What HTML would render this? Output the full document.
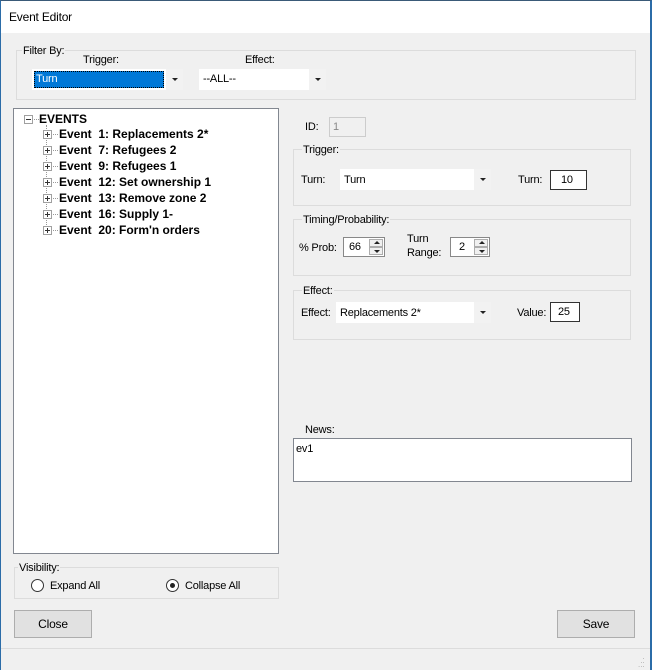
<!DOCTYPE html>
<html><head><meta charset="utf-8"><style>
*{box-sizing:border-box;margin:0;padding:0}
body{width:652px;height:670px;background:#f0f0f0;font-family:"Liberation Sans",sans-serif;font-size:11px;color:#000;position:relative;overflow:hidden;letter-spacing:-0.2px}
.a{position:absolute}
.win{left:0;top:0;width:652px;height:670px;border-left:1px solid #2b6ca8;border-right:2px solid #2b6ca8;border-top:1px solid #3a5a78}
.title{left:1px;top:1px;width:649px;height:32px;background:#fff}
.grp{border:1px solid #dcdcdc}
.lbl{background:#f0f0f0;padding:0 1px;line-height:12px;white-space:nowrap}
.combo{background:#fff;height:21px}
.combo .arr{position:absolute;right:0;top:0;width:17px;height:21px;background:#f2f2f2}
.combo .arr:after{content:"";position:absolute;left:6px;top:9px;border-left:3px solid transparent;border-right:3px solid transparent;border-top:3px solid #222}
.tb{background:#fff;border:1px solid #7a7a7a}
.txt{line-height:13px;white-space:nowrap}
.btn{background:#e1e1e1;border:1px solid #adadad;text-align:center;line-height:26px;font-size:12px}
.spin{position:absolute;right:1px;width:14px;height:8px;background:#f0f0f0;border:1px solid #adadad}
.spin.u:after{content:"";position:absolute;left:4px;top:1px;border-left:3px solid transparent;border-right:3px solid transparent;border-bottom:3px solid #222}
.spin.d:after{content:"";position:absolute;left:4px;top:2px;border-left:3px solid transparent;border-right:3px solid transparent;border-top:3px solid #222}
.tree b{position:absolute;font-size:12px;font-weight:bold;line-height:14px;white-space:nowrap;letter-spacing:0}
.pb{position:absolute;width:9px;height:9px;border:1px solid #a0a0a0;background:#fff}
.pb:before{content:"";position:absolute;left:1px;top:3px;width:5px;height:1px;background:#333}
.pb.p:after{content:"";position:absolute;left:3px;top:1px;width:1px;height:5px;background:#333}
.dl{position:absolute;border-top:1px dotted #999;width:5px;height:0}
.radio{position:absolute;width:13px;height:13px;border:1px solid #333;border-radius:50%;background:#fff}
</style></head><body>
<div class="a title"></div>
<div class="a txt" style="left:9px;top:11px;font-size:12px">Event Editor</div>
<div class="a" style="left:1px;top:648px;width:649px;height:1px;background:#dcdcdc"></div>
<div class="a" style="left:638px;top:655px;font-size:8px;color:#aaa;line-height:4px;letter-spacing:0">&nbsp;&nbsp;.<br>&nbsp;..<br>...</div>

<!-- filter -->
<div class="a grp" style="left:16px;top:50px;width:620px;height:50px"></div>
<div class="a lbl" style="left:22px;top:45px">Filter By:</div>
<div class="a txt" style="left:83px;top:54px">Trigger:</div>
<div class="a txt" style="left:245px;top:54px">Effect:</div>
<div class="a combo" style="left:32px;top:69px;width:151px"><div class="a" style="left:2px;top:2px;width:130px;height:17px;background:#0078d7;border:1px dotted #000"></div><div class="a txt" style="left:4px;top:4px;color:#fff">Turn</div><div class="arr"></div></div>
<div class="a combo" style="left:199px;top:69px;width:127px"><div class="a txt" style="left:4px;top:4px">--ALL--</div><div class="arr"></div></div>

<!-- tree -->
<div class="a tree tb" style="left:13px;top:108px;width:266px;height:446px;border-color:#828790">
<div class="pb" style="left:10px;top:6px"></div><div class="dl" style="left:20px;top:10px"></div>
<b style="left:25px;top:3px">EVENTS</b>
<div class="a" style="left:32px;top:16px;height:106px;border-left:1px dotted #999"></div>
<div class="pb p" style="left:29px;top:21px"></div><div class="dl" style="left:39px;top:25px"></div><b style="left:45px;top:18px">Event&nbsp; 1: Replacements 2*</b>
<div class="pb p" style="left:29px;top:37px"></div><div class="dl" style="left:39px;top:41px"></div><b style="left:45px;top:34px">Event&nbsp; 7: Refugees 2</b>
<div class="pb p" style="left:29px;top:53px"></div><div class="dl" style="left:39px;top:57px"></div><b style="left:45px;top:50px">Event&nbsp; 9: Refugees 1</b>
<div class="pb p" style="left:29px;top:69px"></div><div class="dl" style="left:39px;top:73px"></div><b style="left:45px;top:66px">Event&nbsp; 12: Set ownership 1</b>
<div class="pb p" style="left:29px;top:85px"></div><div class="dl" style="left:39px;top:89px"></div><b style="left:45px;top:82px">Event&nbsp; 13: Remove zone 2</b>
<div class="pb p" style="left:29px;top:101px"></div><div class="dl" style="left:39px;top:105px"></div><b style="left:45px;top:98px">Event&nbsp; 16: Supply 1-</b>
<div class="pb p" style="left:29px;top:117px"></div><div class="dl" style="left:39px;top:121px"></div><b style="left:45px;top:114px">Event&nbsp; 20: Form'n orders</b>
</div>

<!-- ID -->
<div class="a txt" style="left:305px;top:121px">ID:</div>
<div class="a" style="left:329px;top:117px;width:37px;height:20px;border:1px solid #ccc;background:#f0f0f0"><div class="a txt" style="left:3px;top:3px;color:#888">1</div></div>

<!-- trigger grp -->
<div class="a grp" style="left:293px;top:149px;width:338px;height:57px"></div>
<div class="a lbl" style="left:302px;top:144px">Trigger:</div>
<div class="a txt" style="left:301px;top:174px">Turn:</div>
<div class="a combo" style="left:340px;top:169px;width:151px"><div class="a txt" style="left:4px;top:5px">Turn</div><div class="arr"></div></div>
<div class="a txt" style="left:518px;top:174px">Turn:</div>
<div class="a tb" style="left:550px;top:170px;width:37px;height:20px;border-color:#333"><div class="a txt" style="left:10px;top:3px">10</div></div>

<!-- timing -->
<div class="a grp" style="left:293px;top:219px;width:338px;height:57px"></div>
<div class="a lbl" style="left:302px;top:214px">Timing/Probability:</div>
<div class="a txt" style="left:299px;top:242px">% Prob:</div>
<div class="a tb" style="left:343px;top:237px;width:42px;height:20px;border-color:#888"><div class="a txt" style="left:5px;top:3px">66</div><div class="spin u" style="top:1px"></div><div class="spin d" style="top:9px"></div></div>
<div class="a txt" style="left:407px;top:232px;line-height:14px">Turn<br>Range:</div>
<div class="a tb" style="left:450px;top:237px;width:40px;height:20px;border-color:#888"><div class="a txt" style="left:8px;top:3px">2</div><div class="spin u" style="top:1px"></div><div class="spin d" style="top:9px"></div></div>

<!-- effect -->
<div class="a grp" style="left:293px;top:290px;width:338px;height:50px"></div>
<div class="a lbl" style="left:302px;top:285px">Effect:</div>
<div class="a txt" style="left:301px;top:307px">Effect:</div>
<div class="a combo" style="left:336px;top:302px;width:155px"><div class="a txt" style="left:4px;top:5px">Replacements 2*</div><div class="arr"></div></div>
<div class="a txt" style="left:517px;top:307px">Value:</div>
<div class="a tb" style="left:550px;top:302px;width:30px;height:20px;border-color:#333"><div class="a txt" style="left:7px;top:3px">25</div></div>

<!-- news -->
<div class="a txt" style="left:305px;top:424px">News:</div>
<div class="a tb" style="left:293px;top:438px;width:339px;height:44px;border-color:#828790"><div class="a txt" style="left:2px;top:4px">ev1</div></div>

<!-- visibility -->
<div class="a grp" style="left:14px;top:567px;width:265px;height:32px"></div>
<div class="a lbl" style="left:18px;top:562px">Visibility:</div>
<div class="radio" style="left:31px;top:579px"></div>
<div class="a txt" style="left:50px;top:580px">Expand All</div>
<div class="radio" style="left:166px;top:579px"><div class="a" style="left:3px;top:3px;width:5px;height:5px;border-radius:50%;background:#222"></div></div>
<div class="a txt" style="left:185px;top:580px">Collapse All</div>

<div class="a btn" style="left:14px;top:610px;width:78px;height:28px">Close</div>
<div class="a btn" style="left:557px;top:610px;width:78px;height:28px">Save</div>
<div class="a win"></div>
</body></html>
